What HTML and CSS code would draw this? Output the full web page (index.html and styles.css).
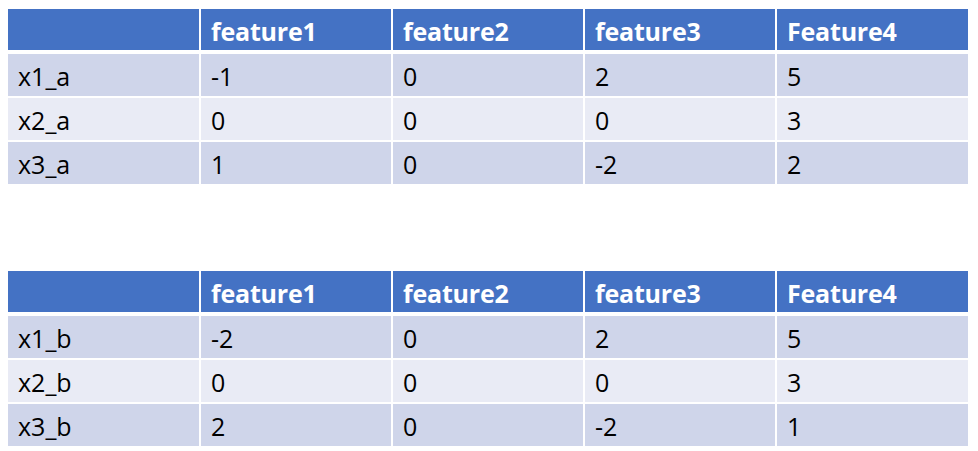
FILE: index.html
```html
<!DOCTYPE html>
<html lang="en">
<head>
<meta charset="utf-8">
<title>Feature tables</title>
<link rel="stylesheet" href="styles.css">
</head>
<body>
<table class="grid">
  <thead>
    <tr><th></th><th>feature1</th><th>feature2</th><th>feature3</th><th>Feature4</th></tr>
  </thead>
  <tbody>
    <tr class="odd"><td>x1_a</td><td>-1</td><td>0</td><td>2</td><td>5</td></tr>
    <tr class="even"><td>x2_a</td><td>0</td><td>0</td><td>0</td><td>3</td></tr>
    <tr class="odd"><td>x3_a</td><td>1</td><td>0</td><td>-2</td><td>2</td></tr>
  </tbody>
</table>
<table class="grid second">
  <thead>
    <tr><th></th><th>feature1</th><th>feature2</th><th>feature3</th><th>Feature4</th></tr>
  </thead>
  <tbody>
    <tr class="odd"><td>x1_b</td><td>-2</td><td>0</td><td>2</td><td>5</td></tr>
    <tr class="even"><td>x2_b</td><td>0</td><td>0</td><td>0</td><td>3</td></tr>
    <tr class="odd"><td>x3_b</td><td>2</td><td>0</td><td>-2</td><td>1</td></tr>
  </tbody>
</table>
</body>
</html>
```
FILE: styles.css
```css
html, body {
  background: #ffffff;
}
body {
  margin: 9px 0 0 8px;
  font-family: "Open Sans", "Noto Sans", sans-serif;
  font-size: 25px;
  color: #000000;
}
.grid {
  width: 960px;
  table-layout: fixed;
  border-collapse: collapse;
  border-spacing: 0;
}
.grid.second {
  margin-top: 87px;
}
.grid th,
.grid td {
  padding: 3px 0 0 10px;
  text-align: left;
  vertical-align: middle;
  border-left: 2px solid #ffffff;
  border-right: 2px solid #ffffff;
  line-height: 1;
  white-space: nowrap;
}
.grid th:first-child,
.grid td:first-child {
  border-left: 0;
}
.grid th:last-child,
.grid td:last-child {
  border-right: 0;
}
.grid th {
  background: #4472c4;
  color: #ffffff;
  font-weight: 700;
  letter-spacing: -0.2px;
  height: 38px;
  border-bottom: 4px solid #ffffff;
}
.grid td {
  height: 39px;
}
.grid tbody tr + tr td {
  border-top: 2px solid #ffffff;
}
.grid tr.odd td {
  background: #cfd5ea;
}
.grid tr.even td {
  background: #e9ebf5;
}
```
